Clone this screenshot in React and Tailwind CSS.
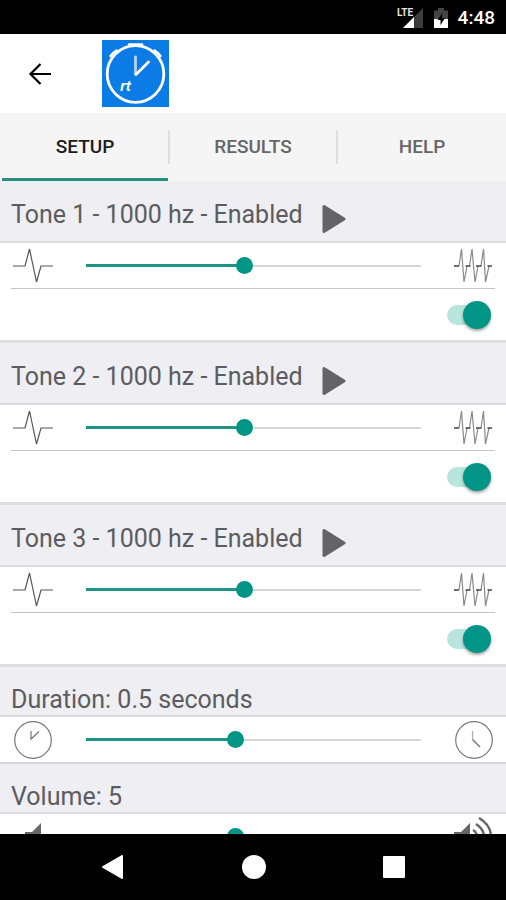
import { useState } from "react";

const TABS = ["Setup", "Results", "Help"];

// Status bar glyphs
const SignalIcon = () => (
  <svg width="28" height="22" viewBox="0 0 28 22" aria-hidden="true">
    <path d="M27 1V21H7z" fill="#3c3c3c" />
    <path d="M18 10V21H7z" fill="#fff" />
    <path d="M0 0H15V10H0z" fill="#000" />
    <text x="1" y="9" fill="#e4e4e4" fontFamily="Roboto, sans-serif" fontSize="10" fontWeight="700">
      LTE
    </text>
  </svg>
);

const BatteryIcon = () => (
  <svg width="14" height="21" viewBox="0 0 14 21" aria-hidden="true">
    <path d="M4 0H10V2.500H14V11H0V2.500H4z" fill="#444" />
    <path d="M0 11H14V20H0z" fill="#fff" />
    <path d="M8.500 5L3.500 12H6.500V17L11 10H8z" fill="#000" />
  </svg>
);

const LogoIcon = () => (
  <svg width="67" height="67" viewBox="0 0 67 67" role="img" aria-label="rt clock">
    <path d="M0 0H67V67H0z" fill="#0b7be6" />
    <g fill="none" stroke="#fff" strokeLinecap="round">
      <circle cx="33.500" cy="34" r="28.300" strokeWidth="2.800" />
      <path d="M27 4.500H40" strokeWidth="2.500" />
      <path d="M8.500 16Q11 12.500 14.500 10.500M52.500 10.500Q56 12.500 58.500 16" strokeWidth="2.500" />
      <path d="M33.500 17V34" stroke="#b9d4f3" strokeWidth="2.800" />
      <path d="M34 34.500L46.500 22" strokeWidth="2.800" />
    </g>
    <text x="18" y="51" fill="#fff" fontFamily="Liberation Sans, sans-serif" fontSize="15" fontWeight="700" fontStyle="italic">
      rt
    </text>
  </svg>
);

// Slider end icons
const SlowPulseIcon = () => (
  <svg width="40" height="38" viewBox="0 0 40 38" fill="none" stroke="#555" aria-hidden="true">
    <path d="M0 19H12L16.500 2L23.500 35L28 19H40" strokeWidth="1.200" />
  </svg>
);

const FastPulseIcon = () => (
  <svg width="40" height="38" viewBox="0 0 40 38" fill="none" aria-hidden="true">
    <path
      d="M5 19L7.500 2L10 35L13 19M15.500 19L18 2L21 35L24 19M27 19L29.500 2L31.500 35L35 19"
      stroke="#8a8a8a"
      strokeWidth="1.200"
    />
    <path d="M0 19H5M11.500 19H16.500M22 19H27.500M33.500 19H38" stroke="#444" strokeWidth="1.300" />
  </svg>
);

const ShortClockIcon = () => (
  <svg width="40" height="40" viewBox="0 0 40 40" fill="none" stroke="#777" aria-hidden="true">
    <circle cx="20" cy="20" r="18.300" strokeWidth="1.200" />
    <path d="M18 11V19L26 11.500" strokeWidth="1.200" />
  </svg>
);

const LongClockIcon = () => (
  <svg width="40" height="40" viewBox="0 0 40 40" fill="none" stroke="#777" aria-hidden="true">
    <circle cx="20" cy="20" r="18.300" strokeWidth="1.200" />
    <path d="M18.500 11V19.500" stroke="#aaa" strokeWidth="1.200" />
    <path d="M18.500 19.500L26 27" strokeWidth="1.500" />
  </svg>
);

const QuietIcon = () => (
  <svg width="40" height="40" viewBox="0 0 40 40" aria-hidden="true">
    <path d="M12 15H19L28 6V34L19 25H12z" fill="#666" />
  </svg>
);

const LoudIcon = () => (
  <svg width="40" height="40" viewBox="0 0 40 40" aria-hidden="true">
    <path d="M0 15H7L16 6V34L7 25H0z" fill="#666" />
    <g fill="none" stroke="#666" strokeWidth="2.500">
      <path d="M19 13Q23 15 23 20Q23 25 19 27" />
      <path d="M22 7Q30 12 30 20Q30 28 22 33" />
      <path d="M25 1Q37 8 37 20Q37 32 25 39" />
    </g>
  </svg>
);

const Slider = ({ label, value, onChange }) => (
  <input
    type="range"
    min="0"
    max="1000"
    value={value}
    onChange={(e) => onChange(Number(e.target.value))}
    aria-label={label}
    className="h-5 min-w-0 flex-1 cursor-pointer appearance-none [&::-webkit-slider-thumb]:h-[17px] [&::-webkit-slider-thumb]:w-[17px] [&::-webkit-slider-thumb]:appearance-none [&::-webkit-slider-thumb]:rounded-full [&::-webkit-slider-thumb]:bg-[#009587]"
    style={{
      background: `linear-gradient(#1f9484, #1f9484) 0 50% / ${value / 10}% 3px no-repeat, linear-gradient(#d6d6d6, #d6d6d6) 0 50% / 100% 2px no-repeat`,
    }}
  />
);

const SliderRow = ({ label, initial, start, end }) => {
  const [value, setValue] = useState(initial);

  return (
    <div className="flex h-[45px] items-center pr-3 pl-[13px]">
      {start}
      <div className="flex flex-1 px-[33px]">
        <Slider label={label} value={value} onChange={setValue} />
      </div>
      {end}
    </div>
  );
};

const ToneSection = ({ number }) => {
  const [enabled, setEnabled] = useState(true);

  return (
    <section>
      <header className="flex h-[62px] items-center gap-[19px] border-b-2 border-[#dcdce0] bg-[#eeeef3] pt-2 pl-[11px]">
        <h2>
          Tone {number} - 1000 hz - {enabled ? "Enabled" : "Disabled"}
        </h2>
        <button type="button" aria-label={`Play tone ${number}`} className="mt-2 cursor-pointer">
          <svg width="24" height="30" viewBox="0 0 24 30" aria-hidden="true">
            <path
              d="M2 2.500L22 15L2 27.500z"
              fill="#646468"
              stroke="#646468"
              strokeWidth="3"
              strokeLinejoin="round"
            />
          </svg>
        </button>
      </header>
      <SliderRow
        label={`Tone ${number} frequency`}
        initial={472}
        start={<SlowPulseIcon />}
        end={<FastPulseIcon />}
      />
      <div className="mx-[11px] flex h-[52px] items-center justify-end border-t border-[#c4c4c4] pr-1">
        <input
          type="checkbox"
          role="switch"
          checked={enabled}
          onChange={(e) => setEnabled(e.target.checked)}
          aria-label={`Enable tone ${number}`}
          className="flex h-5 w-11 cursor-pointer appearance-none items-center rounded-full bg-gray-300 before:h-7 before:w-7 before:shrink-0 before:rounded-full before:bg-gray-100 before:shadow-[0_2px_3px_rgba(0,0,0,0.35)] checked:justify-end checked:bg-[#b9e5de] checked:before:bg-[#009587]"
        />
      </div>
      <div className="h-[3px] bg-[#dededf]" />
    </section>
  );
};

const SettingSection = ({ title, label, initial, start, end }) => (
  <section>
    <header className="flex h-[50px] items-center border-b-2 border-[#dcdce0] bg-[#eeeef3] pt-[18px] pl-[11px]">
      <h2>{title}</h2>
    </header>
    <SliderRow label={label} initial={initial} start={start} end={end} />
    <div className="h-[2px] bg-[#d4d4d8]" />
  </section>
);

const App = () => {
  const [activeTab, setActiveTab] = useState("Setup");

  return (
    <div className="flex h-screen flex-col bg-white font-[Roboto,sans-serif]">
      <div className="flex h-[34px] shrink-0 items-center justify-end bg-black pt-[2px] pr-[11px] text-white">
        <SignalIcon />
        <span className="ml-[10px]">
          <BatteryIcon />
        </span>
        <span className="ml-[10px] text-[19px] leading-6 font-medium">4:48</span>
      </div>

      <header className="flex h-[79px] shrink-0 items-center bg-white pl-7">
        <button type="button" aria-label="Back" className="mr-[50px] cursor-pointer">
          <svg width="24" height="24" viewBox="0 0 24 24" fill="none" stroke="#000" strokeWidth="2.200" aria-hidden="true">
            <path d="M23 12H2.500M12.500 2L2.500 12L12.500 22" />
          </svg>
        </button>
        <LogoIcon />
      </header>

      <nav className="flex h-[68px] shrink-0 items-center bg-[#f5f5f5] pl-[2px]" role="tablist">
        {TABS.map((tab, index) => (
          <div key={tab} className="flex h-full flex-1 items-center">
            <button
              type="button"
              role="tab"
              aria-selected={activeTab === tab}
              onClick={() => setActiveTab(tab)}
              className={`h-full flex-1 cursor-pointer border-b-3 text-[19px] uppercase ${
                activeTab === tab
                  ? "border-[#26907f] font-medium text-[#1c1c1c]"
                  : "border-transparent font-medium text-[#666]"
              }`}
            >
              <span className="block pt-1">{tab}</span>
            </button>
            {index < TABS.length - 1 && <span className="h-[34px] w-[2px] bg-[#dfdfdf]" />}
          </div>
        ))}
      </nav>

      <main className="min-h-0 flex-1 overflow-hidden text-[25px] leading-8 text-[#5c5c60]">
        <ToneSection number={1} />
        <ToneSection number={2} />
        <ToneSection number={3} />
        <SettingSection
          title="Duration: 0.5 seconds"
          label="Duration"
          initial={442}
          start={<ShortClockIcon />}
          end={<LongClockIcon />}
        />
        <SettingSection
          title="Volume: 5"
          label="Volume"
          initial={442}
          start={<QuietIcon />}
          end={<LoudIcon />}
        />
      </main>

      <footer className="flex h-[66px] shrink-0 items-center justify-around bg-black px-[42px]">
        <button type="button" aria-label="Back" className="cursor-pointer">
          <svg width="24" height="24" viewBox="0 0 24 24" aria-hidden="true">
            <path d="M21 1V23L2 12z" fill="#fff" stroke="#fff" strokeWidth="2" strokeLinejoin="round" />
          </svg>
        </button>
        <button type="button" aria-label="Home" className="h-6 w-6 cursor-pointer rounded-full bg-white" />
        <button type="button" aria-label="Recent apps" className="h-[22px] w-[22px] cursor-pointer rounded-[1px] bg-white" />
      </footer>
    </div>
  );
};

export default App;
